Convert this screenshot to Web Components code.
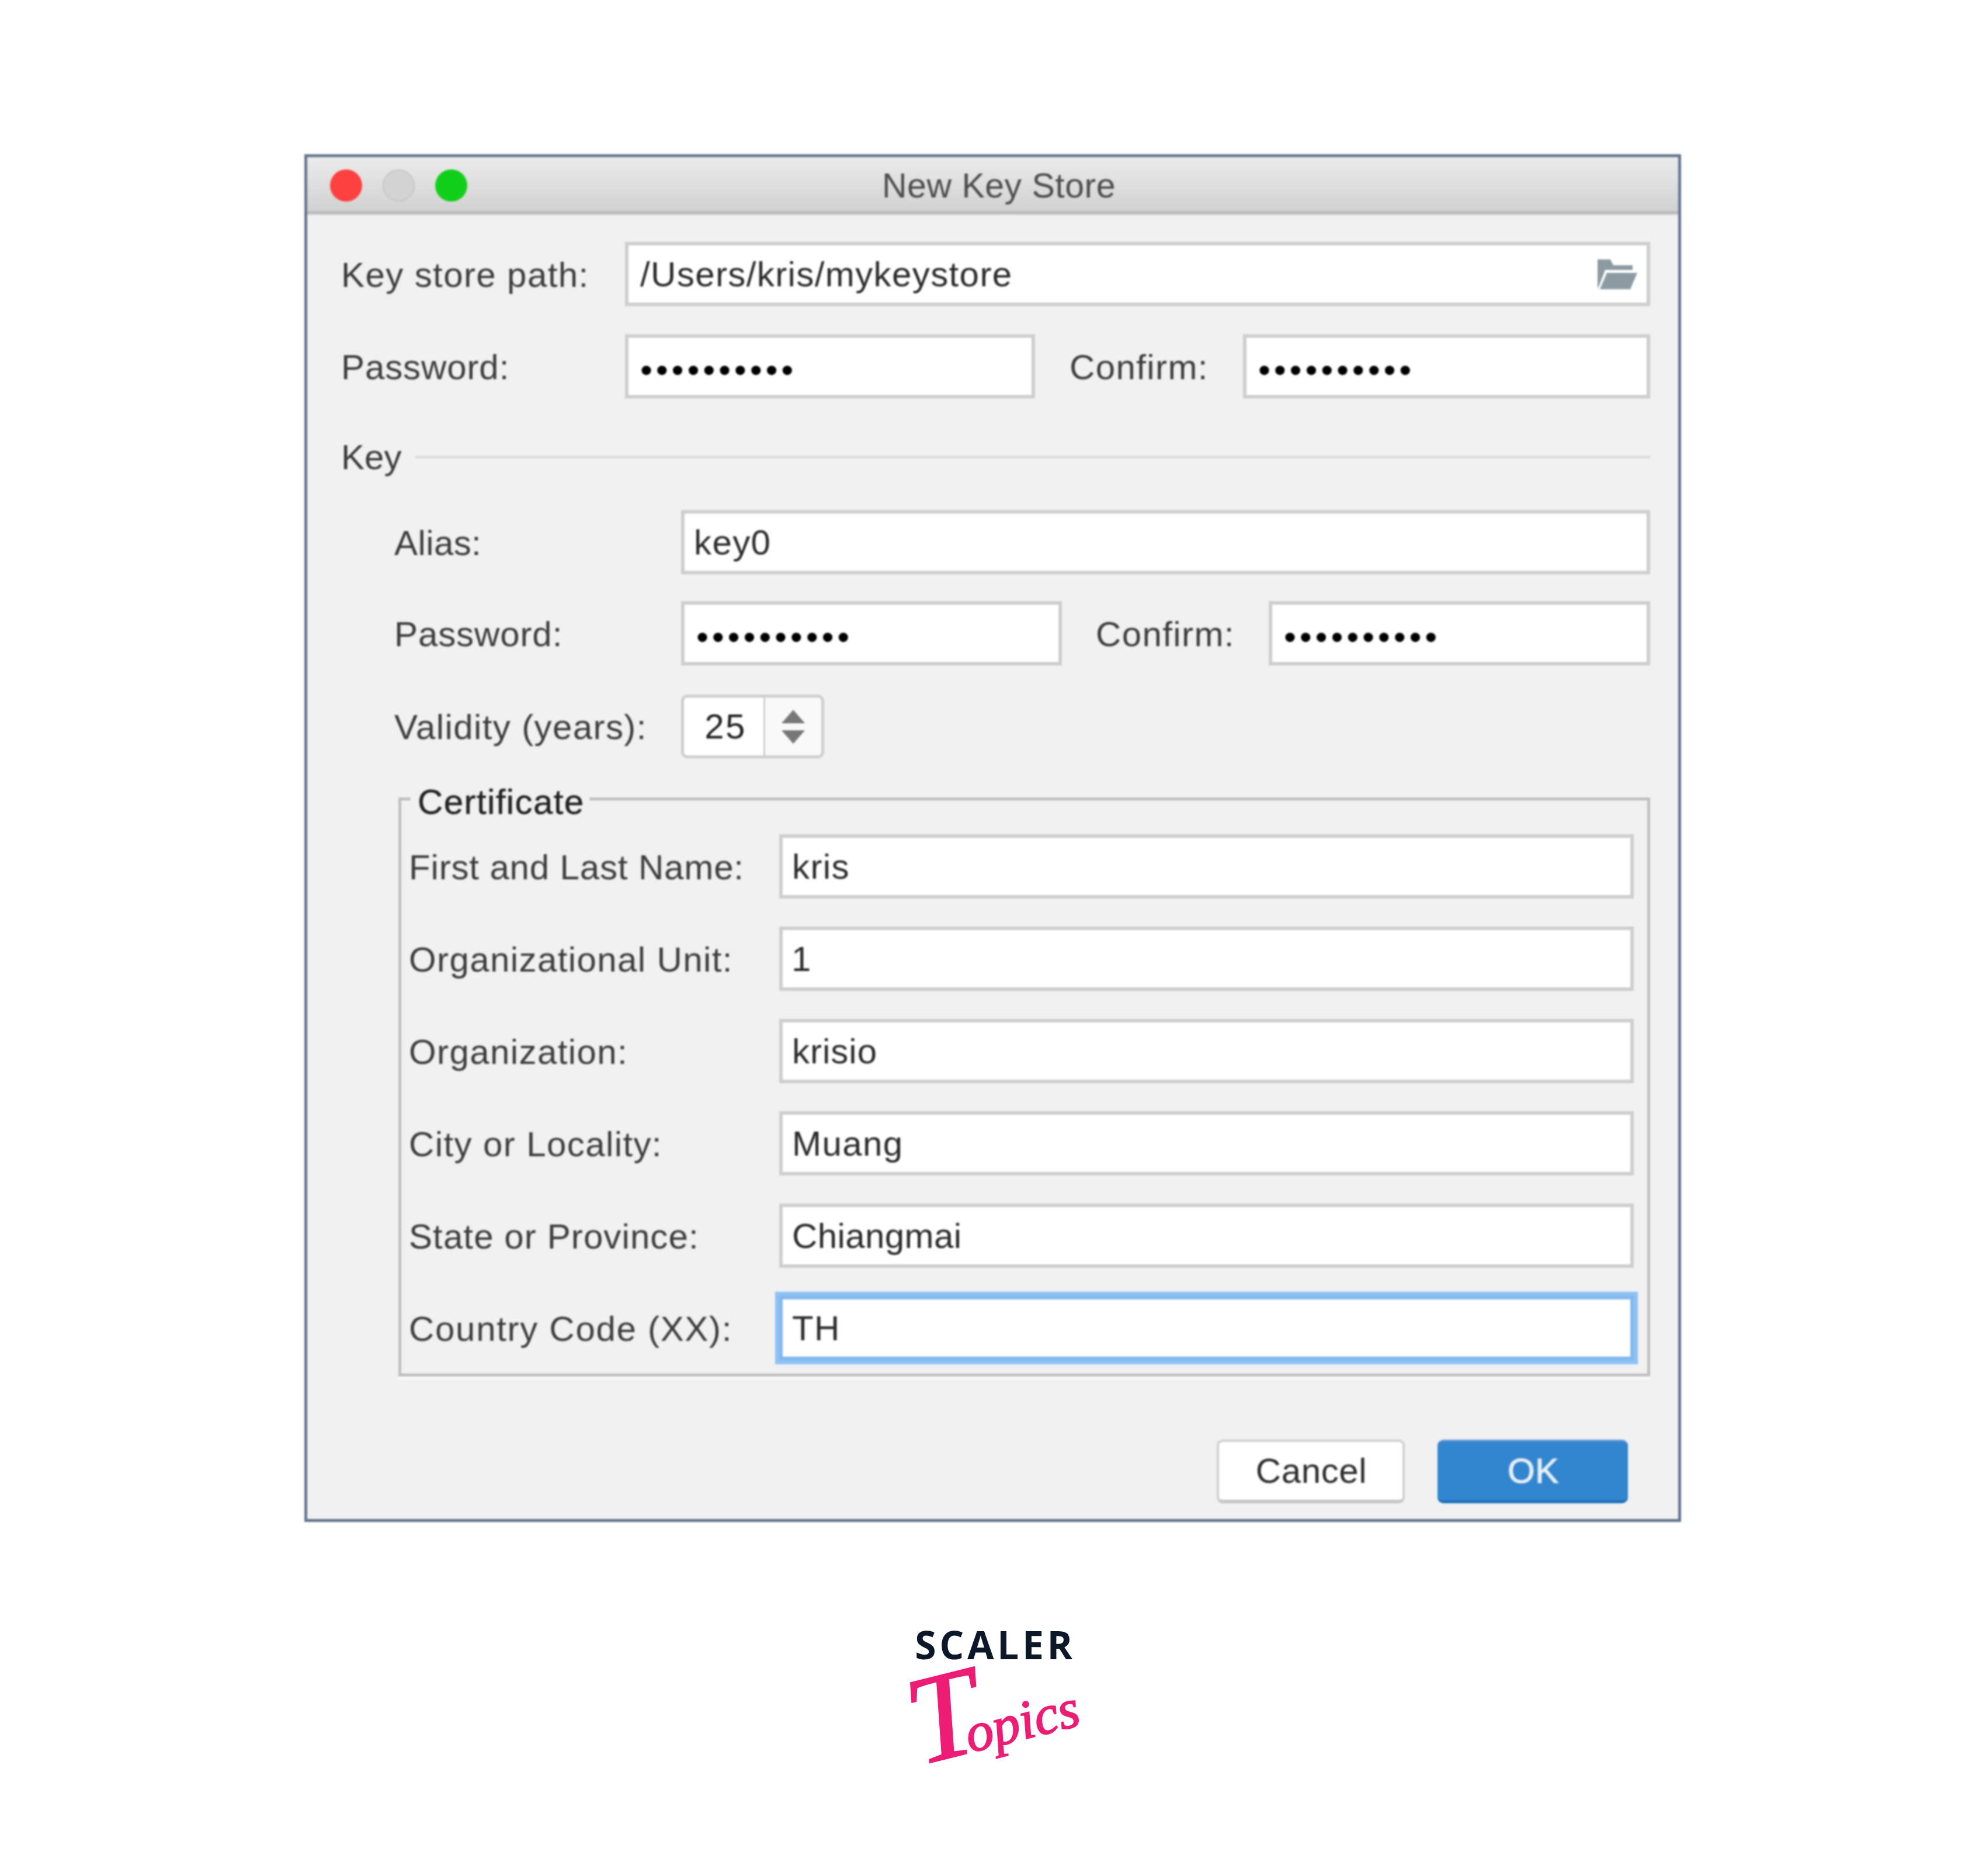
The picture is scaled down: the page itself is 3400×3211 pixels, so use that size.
<!DOCTYPE html>
<html lang="en">
<head>
<meta charset="utf-8">
<title>New Key Store</title>
<style>
  html, body { margin: 0; background: #fff; }
  body { font-family: "Liberation Sans", Arial, sans-serif; width: 3400px; height: 3211px; overflow: hidden; }
  .page { display: flex; flex-direction: column; align-items: flex-start; padding: 264px 0 0 521px; }
</style>
</head>
<body>
<div class="page">
  <ks-window heading="New Key Store">
    <ks-row>
      <ks-label style="--w:486px">Key store path:</ks-label>
      <ks-field value="/Users/kris/mykeystore" style="--pad:26px">
        <svg slot="icon" width="68" height="51" viewBox="0 0 68 51" fill="#8c9aa2"><path d="M0 0H22L27 10H60V18H13L3 44L0 50Z"/><path d="M16 23H68L56 51H4Z"/></svg>
      </ks-field>
    </ks-row>
    <ks-row style="--top:48px">
      <ks-label style="--w:486px;letter-spacing:.9px">Password:</ks-label>
      <ks-field secret value="••••••••••" style="--w:702px;--pad:26px"></ks-field>
      <ks-label style="--w:297px;--ml:59px">Confirm:</ks-label>
      <ks-field secret value="••••••••••" style="--pad:26px"></ks-field>
    </ks-row>
    <ks-section>Key</ks-section>
    <ks-row style="--left:91px">
      <ks-label style="--w:491px;letter-spacing:.4px">Alias:</ks-label>
      <ks-field value="key0" style="--pad:22px"></ks-field>
    </ks-row>
    <ks-row style="--left:91px;--top:46px">
      <ks-label style="--w:491px;letter-spacing:.9px">Password:</ks-label>
      <ks-field secret value="••••••••••" style="--w:652px;--pad:26px"></ks-field>
      <ks-label style="--w:296px;--ml:58px">Confirm:</ks-label>
      <ks-field secret value="••••••••••" style="--pad:26px"></ks-field>
    </ks-row>
    <ks-row style="--left:91px;--top:50px">
      <ks-label style="--w:491px">Validity (years):</ks-label>
      <ks-spinner value="25"></ks-spinner>
    </ks-row>
    <ks-group legend="Certificate">
      <ks-row><ks-label style="--w:634px;letter-spacing:.85px">First and Last Name:</ks-label><ks-field value="kris" style="--pad:22px"></ks-field></ks-row>
      <ks-row><ks-label style="--w:634px">Organizational Unit:</ks-label><ks-field value="1" style="--pad:21px"></ks-field></ks-row>
      <ks-row><ks-label style="--w:634px">Organization:</ks-label><ks-field value="krisio" style="--pad:22px;letter-spacing:1px"></ks-field></ks-row>
      <ks-row><ks-label style="--w:634px">City or Locality:</ks-label><ks-field value="Muang" style="--pad:22px"></ks-field></ks-row>
      <ks-row><ks-label style="--w:634px;letter-spacing:1.1px">State or Province:</ks-label><ks-field value="Chiangmai" style="--pad:22px;letter-spacing:.4px"></ks-field></ks-row>
      <ks-row><ks-label style="--w:634px;letter-spacing:1.7px">Country Code (XX):</ks-label><ks-field focused value="TH" style="--pad:22px"></ks-field></ks-row>
    </ks-group>
    <ks-actions>
      <ks-button style="--w:322px">Cancel</ks-button>
      <ks-button primary style="--w:326px">OK</ks-button>
    </ks-actions>
  </ks-window>
  <scaler-logo></scaler-logo>
</div>

<script>
class KsWindow extends HTMLElement {
  constructor() {
    super();
    this.attachShadow({ mode: 'open' });
  }
  connectedCallback() {
    const heading = this.getAttribute('heading') || '';
    this.shadowRoot.innerHTML = `
      <style>
        :host {
          display: block;
          width: 2357px;
          box-sizing: border-box;
          border: 5px solid #64768f;
          background: #f1f1f1;
          color: #3c3c3c;
          font-family: "Liberation Sans", Arial, sans-serif;
          font-size: 60px;
          letter-spacing: 1.4px;
          filter: blur(1.4px);
        }
        .bar {
          display: grid;
          grid-template-columns: 1fr auto 1fr;
          align-items: center;
          height: 98px;
          box-sizing: border-box;
          padding: 5px 18px 0 39px;
          border-bottom: 6px solid #bcbcbc;
          background: linear-gradient(#ebebeb, #d1d1d1);
        }
        .lights { display: flex; gap: 35px; }
        .lights span { width: 55px; height: 55px; border-radius: 50%; }
        .red { background: #fd4141; }
        .off { background: #d3d3d3; box-shadow: inset 0 0 0 2px #c6c6c6; }
        .green { background: #12cf1a; }
        .title { font-size: 59px; color: #4d4d4d; letter-spacing: 0.5px; }
        .body { padding: 45px 48px 27px 58px; border-top: 2px solid #e8e8e8; }
      </style>
      <div class="bar">
        <div class="lights"><span class="red"></span><span class="off"></span><span class="green"></span></div>
        <div class="title">${heading}</div>
      </div>
      <div class="body"><slot></slot></div>
    `;
  }
}

class KsRow extends HTMLElement {
  constructor() {
    super();
    this.attachShadow({ mode: 'open' });
    this.shadowRoot.innerHTML = `
      <style>
        :host {
          display: flex;
          align-items: center;
          margin-top: var(--top, 0);
          padding-left: var(--left, 0);
        }
      </style>
      <slot></slot>
    `;
  }
}

class KsLabel extends HTMLElement {
  constructor() {
    super();
    this.attachShadow({ mode: 'open' });
    this.shadowRoot.innerHTML = `
      <style>
        :host {
          display: block;
          flex: none;
          width: var(--w, auto);
          margin-left: var(--ml, 0);
          padding-top: 2px;
          white-space: nowrap;
        }
      </style>
      <slot></slot>
    `;
  }
}

class KsField extends HTMLElement {
  constructor() {
    super();
    this.attachShadow({ mode: 'open' });
  }
  connectedCallback() {
    const value = this.getAttribute('value') || '';
    this.shadowRoot.innerHTML = `
      <style>
        :host {
          display: flex;
          align-items: center;
          justify-content: space-between;
          box-sizing: border-box;
          height: 110px;
          padding: 0 24px 0 calc(var(--pad, 22px) - 6px);
          border: 6px solid #cecece;
          background: #fff;
          color: #2a2a2a;
          white-space: nowrap;
        }
        :host([focused]) {
          border-color: #82b8ee;
          outline: 7px solid #8cc2f6;
        }
        .dots { color: #000; letter-spacing: 5.8px; position: relative; top: 6px; }
        ::slotted(svg) { display: block; margin-right: -8px; }
      </style>
      <span class="${this.hasAttribute('secret') ? 'dots' : ''}">${value}</span>
      <slot name="icon"></slot>
    `;
    const w = this.style.getPropertyValue('--w');
    this.style.flex = w ? '0 0 ' + w : '1 1 0';
  }
}

class KsSpinner extends HTMLElement {
  constructor() {
    super();
    this.attachShadow({ mode: 'open' });
  }
  connectedCallback() {
    const value = this.getAttribute('value') || '';
    this.shadowRoot.innerHTML = `
      <style>
        :host {
          display: flex;
          box-sizing: border-box;
          width: 245px;
          height: 109px;
          border: 5px solid #cecece;
          border-radius: 11px;
          overflow: hidden;
          color: #222;
          letter-spacing: 2.5px;
        }
        .val {
          width: 139px;
          flex: none;
          display: flex;
          align-items: center;
          justify-content: center;
          padding-left: 6px;
          background: #fff;
          border-right: 3px solid #cecece;
          box-sizing: border-box;
        }
        .arrows {
          flex: 1;
          display: flex;
          align-items: center;
          justify-content: center;
          background: #f9f9f9;
        }
      </style>
      <div class="val">${value}</div>
      <div class="arrows">
        <svg width="42" height="58" viewBox="0 0 42 58" fill="#777"><path d="M21 0L41 23H1Z"/><path d="M1 35H41L21 58Z"/></svg>
      </div>
    `;
  }
}

class KsSection extends HTMLElement {
  constructor() {
    super();
    this.attachShadow({ mode: 'open' });
    this.shadowRoot.innerHTML = `
      <style>
        :host {
          display: flex;
          align-items: center;
          gap: 24px;
          height: 40px;
          margin: 80px 0 71px;
          letter-spacing: 0;
        }
        .line { flex: 1; height: 3px; background: #d2d2d2; }
      </style>
      <slot></slot><div class="line"></div>
    `;
  }
}

class KsGroup extends HTMLElement {
  constructor() {
    super();
    this.attachShadow({ mode: 'open' });
  }
  connectedCallback() {
    const legend = this.getAttribute('legend') || '';
    this.shadowRoot.innerHTML = `
      <style>
        :host { display: block; margin: 30px 0 0 98px; }
        fieldset {
          margin: 0;
          padding: 22px 23px 23px 13px;
          border: 5px solid #bfbfbf;
          box-shadow: 0 5px 0 #fbfbfb;
          min-width: 0;
        }
        legend {
          margin-left: 3px;
          padding: 12px 8px 0 12px;
          line-height: 66px;
          color: #222;
          -webkit-text-stroke: 0.5px #222;
        }
        .rows { display: flex; flex-direction: column; gap: 48px; }
      </style>
      <fieldset>
        <legend>${legend}</legend>
        <div class="rows"><slot></slot></div>
      </fieldset>
    `;
  }
}

class KsActions extends HTMLElement {
  constructor() {
    super();
    this.attachShadow({ mode: 'open' });
    this.shadowRoot.innerHTML = `
      <style>
        :host {
          display: flex;
          justify-content: flex-end;
          gap: 56px;
          margin-top: 108px;
          padding-right: 38px;
        }
      </style>
      <slot></slot>
    `;
  }
}

class KsButton extends HTMLElement {
  constructor() {
    super();
    this.attachShadow({ mode: 'open' });
    this.shadowRoot.innerHTML = `
      <style>
        :host {
          display: flex;
          align-items: center;
          justify-content: center;
          box-sizing: border-box;
          width: var(--w);
          height: 109px;
          padding-left: 2px;
          border: 4px solid #d0d0d0;
          border-bottom: 6px solid #c6c6c6;
          border-radius: 10px;
          background: #fff;
          color: #2c2c2c;
          letter-spacing: 0.6px;
        }
        :host([primary]) {
          border: 0;
          border-top: 3px solid #6f9fd4;
          border-bottom: 5px solid #1c6fba;
          background: #3286d0;
          color: #e8eef5;
          -webkit-text-stroke: 1.2px #e8eef5;
        }
      </style>
      <slot></slot>
    `;
  }
}

class ScalerLogo extends HTMLElement {
  constructor() {
    super();
    this.attachShadow({ mode: 'open' });
    this.shadowRoot.innerHTML = `
      <style>
        :host {
          display: flex;
          flex-direction: column;
          align-items: center;
          width: 300px;
          margin: 178px 0 0 1033px;
        }
        .word {
          font: 700 66px/62px "Open Sans", sans-serif;
          letter-spacing: 5.6px;
          color: #0c1829;
        }
        .script {
          font: italic 400 94px/1 "Liberation Serif", serif;
          color: #ee1c74;
          -webkit-text-stroke: 2px #ee1c74;
          white-space: nowrap;
          transform: rotate(-14deg);
          margin: -36px 0 0 -16px;
        }
        .script b { font-weight: 400; font-size: 215px; letter-spacing: -30px; }
      </style>
      <div class="word">SCALER</div>
      <div class="script"><b>T</b>opics</div>
    `;
  }
}

customElements.define('ks-window', KsWindow);
customElements.define('ks-row', KsRow);
customElements.define('ks-label', KsLabel);
customElements.define('ks-field', KsField);
customElements.define('ks-spinner', KsSpinner);
customElements.define('ks-section', KsSection);
customElements.define('ks-group', KsGroup);
customElements.define('ks-actions', KsActions);
customElements.define('ks-button', KsButton);
customElements.define('scaler-logo', ScalerLogo);
</script>
</body>
</html>
